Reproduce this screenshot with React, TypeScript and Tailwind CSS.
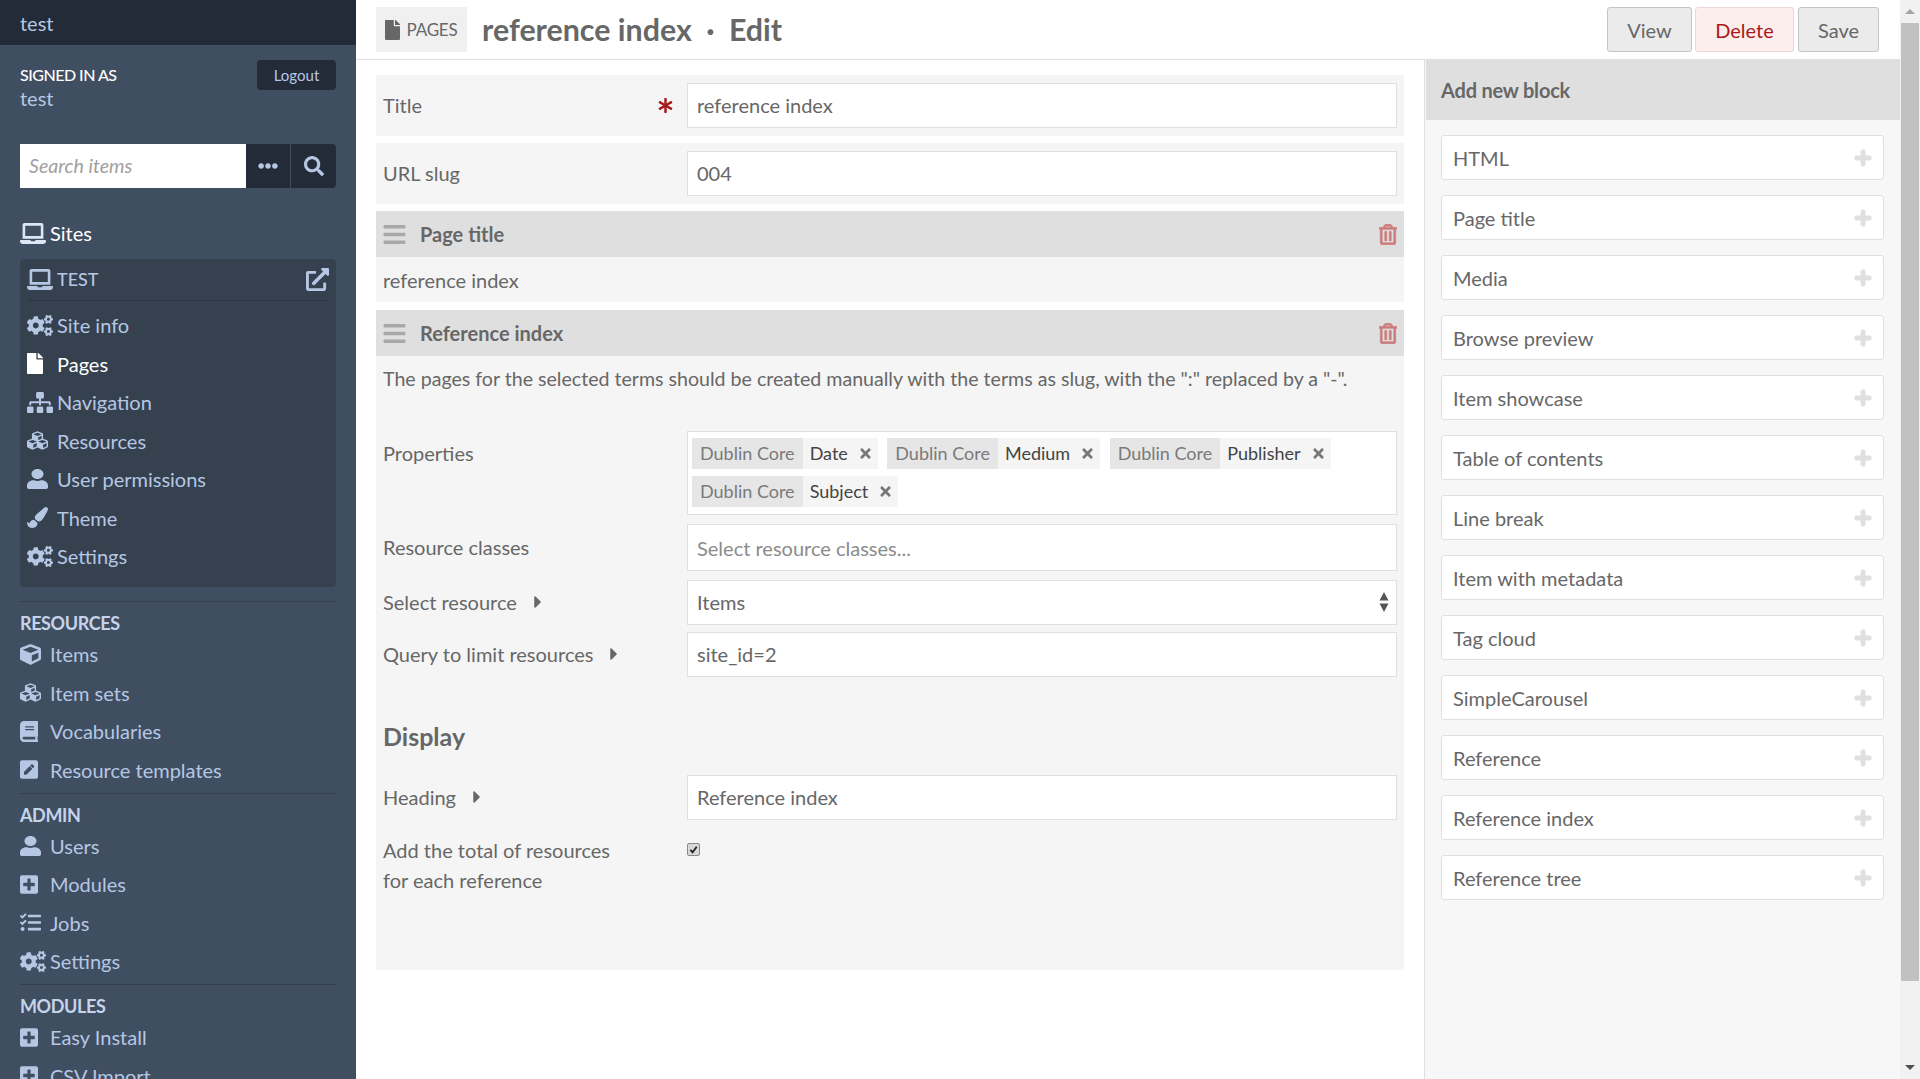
import type { ReactNode } from 'react';
import type { IconType } from 'react-icons';
import {
    FaAsterisk,
    FaBars,
    FaBook,
    FaCaretRight,
    FaCogs,
    FaCube,
    FaCubes,
    FaEllipsisH,
    FaExternalLinkAlt,
    FaFile,
    FaLaptop,
    FaPaintBrush,
    FaPenSquare,
    FaPlus,
    FaPlusSquare,
    FaRegTrashAlt,
    FaSearch,
    FaSitemap,
    FaTasks,
    FaTimes,
    FaUser,
} from 'react-icons/fa';

type NavItem = { icon: IconType; label: string; size: string; active?: boolean };

const siteNav: NavItem[] = [
    { icon: FaCogs, label: 'Site info', size: 'w-[26px] h-[21px]' },
    { icon: FaFile, label: 'Pages', size: 'w-[16px] h-[21px]', active: true },
    { icon: FaSitemap, label: 'Navigation', size: 'w-[26px] h-[21px]' },
    { icon: FaCubes, label: 'Resources', size: 'w-[21px] h-[21px]' },
    { icon: FaUser, label: 'User permissions', size: 'w-[21px] h-[20px]' },
    { icon: FaPaintBrush, label: 'Theme', size: 'w-[21px] h-[21px]' },
    { icon: FaCogs, label: 'Settings', size: 'w-[26px] h-[21px]' },
];

const groups: { title: string; items: NavItem[] }[] = [
    {
        title: 'RESOURCES',
        items: [
            { icon: FaCube, label: 'Items', size: 'w-[21px] h-[21px]' },
            { icon: FaCubes, label: 'Item sets', size: 'w-[21px] h-[21px]' },
            { icon: FaBook, label: 'Vocabularies', size: 'w-[18px] h-[21px]' },
            { icon: FaPenSquare, label: 'Resource templates', size: 'w-[18px] h-[21px]' },
        ],
    },
    {
        title: 'ADMIN',
        items: [
            { icon: FaUser, label: 'Users', size: 'w-[21px] h-[20px]' },
            { icon: FaPlusSquare, label: 'Modules', size: 'w-[18px] h-[21px]' },
            { icon: FaTasks, label: 'Jobs', size: 'w-[21px] h-[21px]' },
            { icon: FaCogs, label: 'Settings', size: 'w-[26px] h-[21px]' },
        ],
    },
    {
        title: 'MODULES',
        items: [
            { icon: FaPlusSquare, label: 'Easy Install', size: 'w-[18px] h-[21px]' },
            { icon: FaPlusSquare, label: 'CSV Import', size: 'w-[18px] h-[21px]' },
        ],
    },
];

const blocks = [
    'HTML',
    'Page title',
    'Media',
    'Browse preview',
    'Item showcase',
    'Table of contents',
    'Line break',
    'Item with metadata',
    'Tag cloud',
    'SimpleCarousel',
    'Reference',
    'Reference index',
    'Reference tree',
];

function NavRow({ item }: { item: NavItem }) {
    const Icon = item.icon;
    return (
        <a className={`flex items-center h-[38.5px] text-[20px] ${item.active ? 'text-white' : 'text-[#b5c7e3]'}`}>
            <span className="w-[30px] shrink-0 flex">
                <Icon className={item.size} preserveAspectRatio="none" />
            </span>
            {item.label}
        </a>
    );
}

function Sidebar() {
    return (
        <aside className="w-[356px] shrink-0 h-full bg-[#404e61] overflow-hidden text-[#b5c7e3]">
            <div className="h-[45px] bg-[#242b38] px-5 pt-[1px] flex items-center text-[20px]">test</div>

            <div className="relative px-5 pt-[18px] h-[99px]">
                <div className="text-[16px] leading-[24px] text-white font-medium tracking-[-0.5px]">SIGNED IN AS</div>
                <div className="text-[20px] leading-[24px] -mt-[1px]">test</div>
                <button className="absolute right-[20px] top-[15px] w-[79px] h-[30px] bg-[#242b38] rounded text-[15px]">
                    Logout
                </button>
            </div>

            <div className="flex mx-5 h-[44px]">
                <div className="w-[228px] bg-white flex items-center px-[9px] pb-[1px] text-[19.6px] italic text-[#a0a0a0]">
                    Search items
                </div>
                <div className="w-[46px] bg-[#242b38] flex items-center justify-center border-r border-[#404e61]">
                    <FaEllipsisH className="w-5 h-5" />
                </div>
                <div className="w-[45px] bg-[#242b38] rounded-r flex items-center justify-center">
                    <FaSearch className="w-5 h-5" />
                </div>
            </div>

            <div className="mx-5 mt-[30px] flex items-center text-[20px] text-white h-[30px]">
                <FaLaptop className="w-[26px] h-[21px] mr-[4px] text-[#dce6f5]" />
                Sites
            </div>

            <div className="mx-5 mt-[11px] h-[328px] bg-[#364150] rounded px-[7px]">
                <div className="h-[42px] flex items-center justify-between border-b border-[#2c3644] text-[18px] font-medium">
                    <span className="flex items-center">
                        <FaLaptop className="w-[26px] h-[21px] mr-[4px]" />
                        TEST
                    </span>
                    <FaExternalLinkAlt className="w-[23px] h-[23px]" />
                </div>
                <div className="pt-[5px]">
                    {siteNav.map((item) => (
                        <NavRow key={item.label} item={item} />
                    ))}
                </div>
            </div>

            <div className="mx-5 mt-[14px]">
                {groups.map((group) => (
                    <div key={group.title} className="border-t border-[#364150] pt-[9px] pb-[3.5px]">
                        <div className="text-[18px] leading-[24px] font-bold tracking-[-0.4px] text-[#c5d4ea]">
                            {group.title}
                        </div>
                        {group.items.map((item) => (
                            <NavRow key={item.label} item={item} />
                        ))}
                    </div>
                ))}
            </div>
        </aside>
    );
}

function HeaderBar() {
    return (
        <header className="h-[60px] shrink-0 border-b border-[#dfdfdf] flex items-center pl-5 pr-[21px]">
            <div className="h-[45px] w-[91px] bg-[#f0f0f0] flex items-center justify-center gap-[6px] text-[17px] tracking-[-0.2px] text-[#676767]">
                <FaFile className="w-[15px] h-[20px]" />
                PAGES
            </div>
            <h1 className="ml-[15px] pt-[1px] text-[30.4px] font-bold text-[#676767]">
                reference index <span className="mx-[7px]">·</span> Edit
            </h1>
            <div className="ml-auto flex items-center gap-[3px]">
                <button className="h-[45px] w-[85px] rounded-[3px] bg-[#ebebeb] border border-[#c4c4c4] text-[20px] text-[#676767]">
                    View
                </button>
                <button className="h-[45px] w-[99px] rounded-[3px] bg-[#fdeeee] border border-[#f0d5d5] text-[20px] text-[#a91919]">
                    Delete
                </button>
                <button className="ml-[1px] h-[45px] w-[81px] rounded-[3px] bg-[#ebebeb] border border-[#c4c4c4] text-[20px] text-[#676767]">
                    Save
                </button>
            </div>
        </header>
    );
}

function TextBox({ children, className = '' }: { children?: ReactNode; className?: string }) {
    return (
        <div className={`w-[710px] bg-white border border-[#dfdfdf] flex items-center pl-[9px] pr-[9px] pb-[1px] text-[20px] ${className}`}>
            {children}
        </div>
    );
}

function Label({ text, caret }: { text: string; caret?: boolean }) {
    return (
        <div className="flex items-center text-[20px] pb-[1px]">
            {text}
            {caret && <FaCaretRight className="ml-[17px] w-[8px] h-[20px]" />}
        </div>
    );
}

function Tag({ name }: { name: string }) {
    return (
        <span className="flex h-[31px] bg-[#f5f5f5] items-center text-[18px]">
            <span className="bg-[#e6e6e6] h-full flex items-center px-2 text-[#7a7a7a]">Dublin Core</span>
            <span className="ml-[7px] text-[#444]">{name}</span>
            <FaTimes className="ml-[11px] mr-[6px] w-[13px] h-[15px] text-[#777]" />
        </span>
    );
}

function BlockHead({ title }: { title: string }) {
    return (
        <div className="h-[46px] bg-[#dfdfdf] flex items-center px-[7px]">
            <FaBars className="w-[23px] h-[25px] text-[#a8a8a8]" />
            <span className="ml-[14px] text-[20px] font-bold">{title}</span>
            <FaRegTrashAlt className="ml-auto w-[18px] h-[21px] text-[#cb7c7c]" stroke="currentColor" strokeWidth={16} />
        </div>
    );
}

function EditForm() {
    return (
        <main className="w-[1068px] shrink-0 pl-5 pr-5 pt-[15px] text-[#676767]">
            <div className="bg-[#f5f5f5] h-[61px] flex items-center px-[7px] justify-between text-[20px]">
                <div className="flex-1 flex items-center justify-between pr-[14px]">
                    <Label text="Title" />
                    <FaAsterisk className="w-[15px] h-[15px] text-[#a91919]" />
                </div>
                <TextBox className="h-[45px]">reference index</TextBox>
            </div>
            <div className="bg-[#f5f5f5] h-[61px] mt-[7px] flex items-center px-[7px] justify-between">
                <Label text="URL slug" />
                <TextBox className="h-[45px]">004</TextBox>
            </div>

            <div className="mt-[7px]">
                <BlockHead title="Page title" />
                <div className="h-[45px] bg-[#f5f5f5] flex items-center px-[7px] text-[20px]">reference index</div>
            </div>

            <div className="mt-[8px] bg-[#f5f5f5] h-[660px]">
                <BlockHead title="Reference index" />
                <div className="px-[7px]">
                    <p className="text-[19.6px] leading-[28px] pt-[9px]">
                        The pages for the selected terms should be created manually with the terms as slug, with the ":" replaced by a "-".
                    </p>

                    <div className="mt-[38px] flex justify-between">
                        <div className="pt-[7px]"><Label text="Properties" /></div>
                        <TextBox className="h-[84px] !block !px-[4px] pt-[6px]">
                            <div className="flex flex-wrap gap-x-[9.5px] gap-y-[7px]">
                                <Tag name="Date" />
                                <Tag name="Medium" />
                                <Tag name="Publisher" />
                                <Tag name="Subject" />
                            </div>
                        </TextBox>
                    </div>

                    <div className="mt-[9px] flex justify-between items-center">
                        <Label text="Resource classes" />
                        <TextBox className="h-[47px] pt-[1px] text-[#8b8b8b]">Select resource classes...</TextBox>
                    </div>

                    <div className="mt-[9px] flex justify-between items-center">
                        <Label text="Select resource" caret />
                        <TextBox className="h-[45px] justify-between !pr-[7px]">
                            Items
                            <svg viewBox="0 0 10 22" className="w-[10px] h-[22px] text-[#555]" fill="currentColor">
                                <path d="M5 1 9.5 9.5H.5zM5 21 .5 12.5h9z" />
                            </svg>
                        </TextBox>
                    </div>

                    <div className="mt-[7px] flex justify-between items-center">
                        <Label text="Query to limit resources" caret />
                        <TextBox className="h-[45px]">site_id=2</TextBox>
                    </div>

                    <h3 className="mt-[41px] text-[25px] font-bold">Display</h3>

                    <div className="mt-[19px] flex justify-between items-center">
                        <Label text="Heading" caret />
                        <TextBox className="h-[45px]">Reference index</TextBox>
                    </div>

                    <div className="mt-[15px] flex justify-between">
                        <div className="text-[20px] leading-[30px] w-[250px]">Add the total of resources for each reference</div>
                        <div className="w-[710px]">
                            <span className="block mt-[8px] w-[13px] h-[13px] rounded-[2px] bg-[#d8d8d8] border border-[#888] relative">
                                <svg viewBox="0 0 12 12" className="absolute inset-0" fill="none" stroke="#222" strokeWidth="2">
                                    <path d="M2.5 6.5 5 9l4.5-6" />
                                </svg>
                            </span>
                        </div>
                    </div>
                </div>
            </div>
        </main>
    );
}

function BlockPanel() {
    return (
        <section className="flex-1 border-l border-[#dfdfdf] bg-[#f7f7f7] text-[#676767]">
            <div className="ml-[1px] h-[60px] bg-[#dfdfdf] flex items-center px-[15px] text-[20px] font-bold tracking-[-0.2px]">
                Add new block
            </div>
            <div className="px-4 pt-[15px] flex flex-col gap-[15px]">
                {blocks.map((block) => (
                    <button
                        key={block}
                        className="h-[45px] w-[443px] bg-white border border-[#dfdfdf] rounded-[3px] flex items-center justify-between pl-[11px] pr-[11px] text-[20px]"
                    >
                        {block}
                        <FaPlus className="w-[18px] h-[18px] text-[#dfdfdf]" stroke="currentColor" strokeWidth={40} />
                    </button>
                ))}
            </div>
        </section>
    );
}

function Scrollbar() {
    return (
        <div className="w-[20px] shrink-0 h-full bg-[#f1f1f1] flex flex-col">
            <div className="h-[23px] flex items-center justify-center">
                <span className="block w-0 h-0 border-x-[5px] border-x-transparent border-b-[5px] border-b-[#a3a3a3]" />
            </div>
            <div className="h-[958px] mx-[1px] bg-[#c1c1c1]" />
            <div className="flex-1" />
            <div className="h-[23px] flex items-center justify-center">
                <span className="block w-0 h-0 border-x-[5px] border-x-transparent border-t-[5px] border-t-[#505050]" />
            </div>
        </div>
    );
}

export default function App() {
    return (
        <div className="w-[1920px] h-[1079px] overflow-hidden flex bg-white font-['Lato',sans-serif]">
            <Sidebar />
            <div className="w-[1544px] h-full flex flex-col">
                <HeaderBar />
                <div className="flex flex-1">
                    <EditForm />
                    <BlockPanel />
                </div>
            </div>
            <Scrollbar />
        </div>
    );
}
